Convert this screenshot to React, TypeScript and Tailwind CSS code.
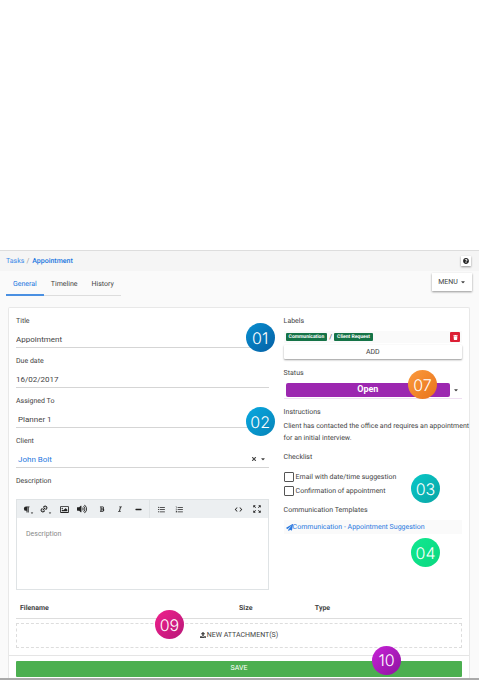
import React from "react";
import {
  FaBold,
  FaCaretDown,
  FaItalic,
  FaMinus,
  FaPaperPlane,
  FaParagraph,
  FaQuestionCircle,
  FaRegImage,
  FaTimes,
  FaTrash,
  FaUpload,
  FaVolumeUp,
} from "react-icons/fa";
import { MdCode, MdFormatListBulleted, MdFormatListNumbered, MdZoomOutMap } from "react-icons/md";
import { Link2 } from "lucide-react";

function Marker({ n, className }: { n: string; className: string }) {
  return (
    <span
      className={`absolute z-10 flex size-[29px] items-center justify-center rounded-full font-[Inter,sans-serif] text-[16px] leading-none font-light text-white ${className}`}
    >
      {n}
    </span>
  );
}

const labelClass = "block h-3 text-[7px] leading-3 text-[#444]";
const inputClass =
  "block h-[21px] w-full border-b border-[#d5d5d5] bg-transparent pt-1 text-[8px] outline-none";
const tabClass = "h-[23px] px-[7px] pt-[5px] leading-3";

function Tool({ label, children }: { label: string; children: React.ReactNode }) {
  return (
    <button
      type="button"
      aria-label={label}
      className="flex h-[18px] w-[18px] items-center justify-center text-[7px] text-[#222]"
    >
      {children}
    </button>
  );
}

function Toolbar() {
  return (
    <div className="flex h-[18px] items-center bg-[#eceff1] pl-[2px]">
      <Tool label="Paragraph">
        <FaParagraph />
        <FaCaretDown className="mt-2 size-1" />
      </Tool>
      <Tool label="Link">
        <Link2 className="size-2 -rotate-45" strokeWidth={3} />
        <FaCaretDown className="mt-2 size-1" />
      </Tool>
      <Tool label="Image">
        <FaRegImage className="size-[9px]" />
      </Tool>
      <Tool label="Audio">
        <FaVolumeUp className="size-[10px]" />
      </Tool>
      <span className="w-[2px]" />
      <Tool label="Bold">
        <FaBold className="size-[6px]" />
      </Tool>
      <Tool label="Italic">
        <FaItalic className="size-[6px]" />
      </Tool>
      <Tool label="Rule">
        <FaMinus />
      </Tool>
      <span className="ml-[2px] h-full w-px bg-[#dfe3e5]" />
      <span className="w-[2px]" />
      <Tool label="Bulleted list">
        <MdFormatListBulleted className="size-[9px]" />
      </Tool>
      <Tool label="Numbered list">
        <MdFormatListNumbered className="size-[9px]" />
      </Tool>
      <span className="flex-1" />
      <Tool label="Source">
        <MdCode className="size-[9px]" />
      </Tool>
      <Tool label="Full screen">
        <MdZoomOutMap className="size-[10px]" />
      </Tool>
      <span className="w-[2px]" />
    </div>
  );
}

function LeftColumn() {
  return (
    <div className="flex min-w-0 flex-1 flex-col gap-[7px]">
      <div className="relative">
        <label htmlFor="title" className={labelClass}>Title</label>
        <input id="title" defaultValue="Appointment" className={`${inputClass} text-[#444]`} />
        <Marker n="01" className="top-2 -right-[6px] bg-linear-to-br from-[#0a8fd0] to-[#0560a5]" />
      </div>
      <div>
        <label htmlFor="due" className={labelClass}>Due date</label>
        <input id="due" defaultValue="16/02/2017" className={`${inputClass} text-[#444]`} />
      </div>
      <div className="relative">
        <label htmlFor="assigned" className={labelClass}>Assigned To</label>
        <input id="assigned" defaultValue="Planner 1" className={`${inputClass} pl-[2px] text-[#444]`} />
        <Marker n="02" className="top-3 -right-[6px] bg-linear-to-br from-[#08a8e0] to-[#0784b8]" />
      </div>
      <div>
        <label htmlFor="client" className={labelClass}>Client</label>
        <div className="flex items-center border-b border-[#d5d5d5]">
          <input
            id="client"
            defaultValue="John Bolt"
            className="h-5 min-w-0 flex-1 bg-transparent pt-1 pl-[2px] text-[8px] text-[#2979e0] outline-none"
          />
          <button type="button" aria-label="Clear client" className="mt-1 mr-[3px] text-[#444]">
            <FaTimes className="size-[6px]" />
          </button>
          <button type="button" aria-label="Choose client" className="mt-1 mr-[3px] text-[#444]">
            <FaCaretDown className="size-[6px]" />
          </button>
        </div>
      </div>
      <div>
        <label htmlFor="description" className={labelClass}>Description</label>
        <div className="mt-3 border border-[#dfe3e5]">
          <Toolbar />
          <textarea
            id="description"
            placeholder="Description"
            className="block h-[71px] w-full resize-none px-[9px] py-2.5 text-[7px] leading-3 outline-none placeholder:text-[#888]"
          />
        </div>
      </div>
    </div>
  );
}

function Check({ label }: { label: string }) {
  return (
    <label className="flex h-3.5 items-center gap-[2px] text-[7px] text-[#444]">
      <input type="checkbox" className="size-[10px] appearance-none rounded-[1px] border border-[#555] bg-white" />
      {label}
    </label>
  );
}

function RightColumn() {
  return (
    <div className="relative w-2/5 shrink-0 text-[7px] text-[#444]">
      <h2 className={labelClass}>Labels</h2>
      <div className="mt-1 flex h-3 items-center bg-[#fafafa] px-[2px] text-[5px]">
        <span className="rounded-[1px] bg-[#157347] px-[3px] leading-[8px] font-bold text-white">Communication</span>
        <span className="px-[2px] text-[7px] leading-2">/</span>
        <span className="rounded-[1px] bg-[#157347] px-[3px] leading-[8px] font-bold text-white">Client Request</span>
        <button
          type="button"
          aria-label="Remove label"
          className="ml-auto flex size-[10px] items-center justify-center rounded-[1px] bg-[#dc1f35] text-white"
        >
          <FaTrash className="size-[5px]" />
        </button>
      </div>
      <button
        type="button"
        className="mt-[2px] block h-3.5 w-full rounded-[1px] bg-white text-[7px] leading-3 shadow-[0_1px_2px_rgba(0,0,0,0.4)]"
      >
        ADD
      </button>
      <h2 className={`${labelClass} mt-2`}>Status</h2>
      <div className="relative mt-1 flex h-4 items-center border-b border-[#efdff2] pb-px pl-[2px]">
        <select
          aria-label="Status"
          className="h-3.5 min-w-0 flex-1 appearance-none rounded-[2px] bg-[#9c27b0] text-center text-[9px] font-bold text-white [text-align-last:center]"
        >
          <option>Open</option>
        </select>
        <FaCaretDown className="mx-[3px] size-[6px]" />
        <Marker n="07" className="-top-[13px] right-[25px] bg-linear-to-br from-[#fb9a3c] to-[#e8731a]" />
      </div>
      <h2 className={`${labelClass} mt-[7px]`}>Instructions</h2>
      <p className="mt-[2px] -mr-2 leading-3">
        Client has contacted the office and requires an appointment for an initial interview.
      </p>
      <h2 className={`${labelClass} mt-[7px]`}>Checklist</h2>
      <div className="relative mt-[7px]">
        <Check label="Email with date/time suggestion" />
        <Check label="Confirmation of appointment" />
        <Marker n="03" className="top-1 right-[22px] bg-linear-to-br from-[#08c8c8] to-[#0aa5a5]" />
      </div>
      <h2 className={`${labelClass} mt-[6px]`}>Communication Templates</h2>
      <div className="relative mt-1 flex h-3.5 items-center bg-[#fafafa] pl-[2px]">
        <a href="#template" className="flex items-center text-[#2979e0]">
          <FaPaperPlane className="size-[7px]" />
          Communication - Appointment Suggestion
        </a>
        <Marker n="04" className="top-[18px] right-[22px] bg-linear-to-br from-[#10e890] to-[#0bd880]" />
      </div>
    </div>
  );
}

export default function App() {
  return (
    <div className="bg-white pt-[250px] font-[Roboto,sans-serif] text-[#444] [text-rendering:geometricPrecision]">
      <main className="mr-[22px] border-t border-b-2 border-t-[#ddd] border-b-[#aaa] bg-[#fafafa]">
        <header className="flex h-5 items-center justify-between bg-[#f5f5f5] pr-2 pl-[6px] text-[7px]">
          <nav className="flex gap-[2px]">
            <a href="#tasks" className="text-[#3b8ae8]">Tasks</a>
            <span className="text-[#999]">/</span>
            <a href="#appointment" className="ml-px font-medium text-[#1976e0]">Appointment</a>
          </nav>
          <button
            type="button"
            aria-label="Help"
            className="flex size-[10px] items-center justify-center bg-white text-[#222] shadow-[0_1px_2px_rgba(0,0,0,0.4)]"
          >
            <FaQuestionCircle className="size-[6px]" />
          </button>
        </header>
        <div className="flex items-start justify-between pt-[2px] pr-[7px] pl-[6px]">
          <nav className="flex text-[7px]">
            <a href="#general" className={`${tabClass} border-b-2 border-[#4a90e2] text-[#1976e0]`}>General</a>
            <a href="#timeline" className={`${tabClass} border-b border-[#ddd]`}>Timeline</a>
            <a href="#history" className={`${tabClass} border-b border-[#ddd]`}>History</a>
          </nav>
          <button
            type="button"
            className="flex h-[18px] w-10 items-center justify-center gap-[2px] bg-white text-[7px] shadow-[0_1px_2px_rgba(0,0,0,0.4)]"
          >
            MENU <FaCaretDown className="size-[6px]" />
          </button>
        </div>
        <form className="mt-[11px] mr-[9px] ml-2 rounded-t-[2px] border border-b-0 border-[#e8e8e8] bg-white">
          <div className="flex gap-[15px] px-[7px] pt-[7px]">
            <LeftColumn />
            <RightColumn />
          </div>
          <div className="relative mx-[7px] mt-2">
            <table className="w-full table-fixed border-b border-[#ddd] text-left text-[7px]">
              <thead>
                <tr className="h-5">
                  <th className="w-1/2 pl-1 font-bold">Filename</th>
                  <th className="w-[17%] font-bold">Size</th>
                  <th className="font-bold">Type</th>
                </tr>
              </thead>
            </table>
            <button
              type="button"
              className="mt-1 flex h-[25px] w-full items-center justify-center gap-px border border-dashed border-[#ddd] text-[7px]"
            >
              <FaUpload className="size-[6px]" />
              NEW ATTACHMENT(S)
            </button>
            <Marker n="09" className="top-3 left-[139px] bg-linear-to-br from-[#f0208c] to-[#b81878]" />
          </div>
          <div className="relative mt-[7px] border-t border-[#e5e5e5] px-[7px] pt-[5px] pb-px">
            <button type="submit" className="block h-4 w-full rounded-[1px] bg-[#4caf50] text-[7px] text-white">
              SAVE
            </button>
            <Marker n="10" className="-top-[10px] right-[68px] bg-linear-to-br from-[#c822d8] to-[#8e14a0]" />
          </div>
        </form>
      </main>
    </div>
  );
}
